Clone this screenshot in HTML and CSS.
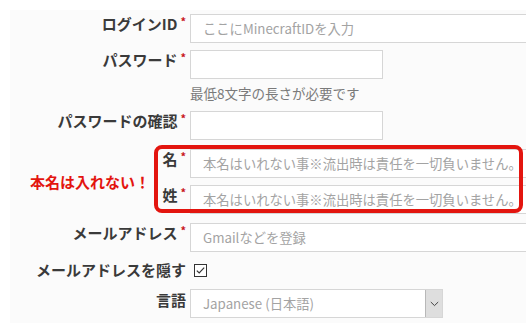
FILE: index.html
```html
<!DOCTYPE html>
<html lang="ja">
<head>
<meta charset="utf-8">
<link rel="stylesheet" href="styles.css">
</head>
<body>
<div class="panel">
  <div class="row r1">
    <div class="label">ログインID<span class="req">*</span></div>
    <div class="control"><input class="input wide" type="text" placeholder="ここにMinecraftIDを入力"></div>
  </div>
  <div class="row r2">
    <div class="label">パスワード<span class="req">*</span></div>
    <div class="control">
      <input class="input short" type="password">
      <div class="help">最低8文字の長さが必要です</div>
    </div>
  </div>
  <div class="row r3">
    <div class="label">パスワードの確認<span class="req">*</span></div>
    <div class="control"><input class="input short" type="password"></div>
  </div>
  <div class="name-group">
    <div class="note">本名は入れない！</div>
    <div class="name-rows">
      <div class="row sub r4">
        <div class="label sublabel">名<span class="req">*</span></div>
        <div class="control"><input class="input wide" type="text" placeholder="本名はいれない事※流出時は責任を一切負いません。"></div>
      </div>
      <div class="row sub">
        <div class="label sublabel">姓<span class="req">*</span></div>
        <div class="control"><input class="input wide" type="text" placeholder="本名はいれない事※流出時は責任を一切負いません。"></div>
      </div>
    </div>
  </div>
  <div class="row r6">
    <div class="label">メールアドレス<span class="req">*</span></div>
    <div class="control"><input class="input wide" type="text" placeholder="Gmailなどを登録"></div>
  </div>
  <div class="row r7">
    <div class="label">メールアドレスを隠す</div>
    <div class="control check-control">
      <span class="checkbox"><svg width="13" height="13" viewBox="0 0 13 13"><rect x="0.5" y="0.5" width="12" height="12" fill="#fff" stroke="#333"/><path d="M2.8 6.6 L5.2 9 L10.2 3.6" fill="none" stroke="#333" stroke-width="1.2"/></svg></span>
    </div>
  </div>
  <div class="row r8">
    <div class="label lang">言語</div>
    <div class="control">
      <div class="select">
        <span class="select-text">Japanese (日本語)</span>
        <span class="select-btn"><svg width="9" height="6" viewBox="0 0 9 6"><path d="M0.8 1 L4.5 4.6 L8.2 1" fill="none" stroke="#444" stroke-width="1"/></svg></span>
      </div>
    </div>
  </div>
</div>
</body>
</html>
```

FILE: styles.css
```css
html, body {
  margin: 0;
  padding: 0;
  overflow: hidden;
  background: #ffffff;
}
body {
  font-family: "Noto Sans CJK JP", "Noto Sans", sans-serif;
  width: 526px;
  height: 323px;
}
.panel {
  margin: 10px 0 0 10px;
  width: 516px;
  height: 313px;
  background: #fbfbfb;
  padding-top: 4px;
  box-sizing: border-box;
}
.row {
  display: flex;
  align-items: flex-start;
}
.label {
  width: 176px;
  flex: none;
  text-align: right;
  font-weight: bold;
  font-size: 15px;
  line-height: 20px;
  color: #3a3a3a;
  white-space: nowrap;
}
.req {
  color: #c8161d;
  font-size: 11px;
  line-height: 10px;
  vertical-align: top;
  margin-left: 3px;
  position: relative;
  top: 2px;
}
.control {
  margin-left: 4px;
  flex: 1;
  min-width: 0;
}
.input {
  display: block;
  box-sizing: border-box;
  height: 29px;
  border: 1px solid #d6d6d6;
  background: #fff;
  padding: 0 12px;
  font-family: "Noto Sans CJK JP", "Noto Sans", sans-serif;
  font-size: 13.3px;
  color: #555;
  outline: none;
  margin: 0;
}
.input::placeholder {
  color: #a3a3a3;
}
.wide {
  width: 100%;
  border-right-width: 0;
  padding-right: 0;
}
.short { width: 193px; }
.help {
  margin-top: 4px;
  font-size: 13.5px;
  line-height: 20px;
  color: #7a7a7a;
}
.r1 { margin-bottom: 7px; }
.r2 { margin-bottom: 8px; }
.r3 { margin-bottom: 9px; }
.name-group {
  position: relative;
  display: flex;
  align-items: center;
  margin-bottom: 9px;
}
.name-group::after {
  content: "";
  position: absolute;
  left: 144px;
  top: -4px;
  width: 369px;
  height: 68px;
  box-sizing: border-box;
  border: 4px solid #e3150f;
  border-radius: 8px;
  pointer-events: none;
}
.note {
  width: 144px;
  flex: none;
  box-sizing: border-box;
  padding-left: 20px;
  font-size: 15px;
  font-weight: bold;
  line-height: 20px;
  color: #e3150f;
  white-space: nowrap;
}
.name-rows {
  flex: 1;
  min-width: 0;
}
.sublabel {
  width: 32px;
}
.r4 { margin-bottom: 7px; }
.r6 { margin-bottom: 8px; }
.r7 { margin-bottom: 9px; }
.check-control {
  height: 20px;
  display: flex;
  align-items: center;
  padding-left: 4px;
}
.checkbox {
  display: block;
  width: 13px;
  height: 13px;
}
.checkbox svg { display: block; }
.lang { padding-top: 1px; }
.select {
  box-sizing: border-box;
  width: 253px;
  height: 29px;
  border: 1px solid #d6d6d6;
  background: #fff;
  display: flex;
  align-items: stretch;
}
.select-text {
  flex: 1;
  padding-left: 12px;
  font-size: 13.3px;
  line-height: 27px;
  color: #a3a3a3;
}
.select-btn {
  width: 16px;
  border-left: 1px solid #b8b8b8;
  background: #dedede;
  display: flex;
  align-items: center;
  justify-content: center;
}
.select-btn svg { display: block; }
```
